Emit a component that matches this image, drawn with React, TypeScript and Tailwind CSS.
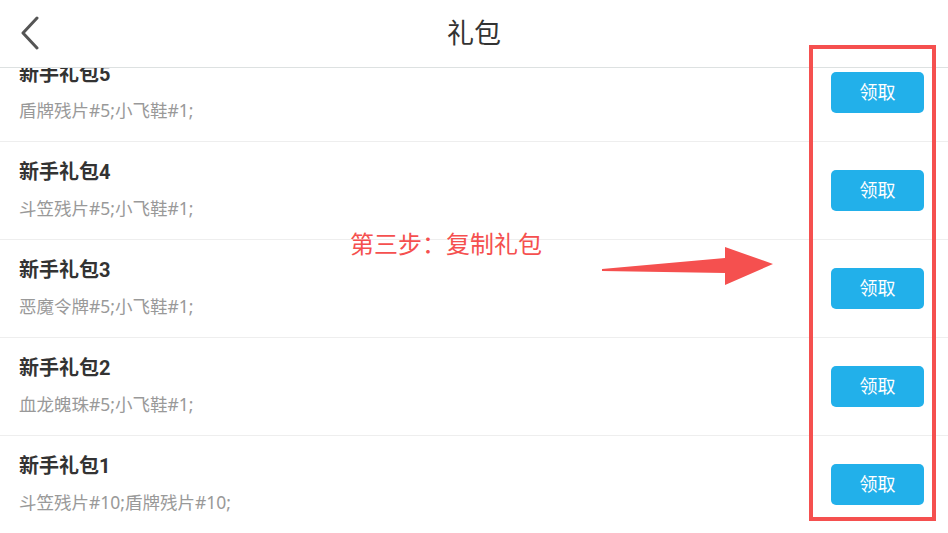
import React from 'react';

interface Gift {
  name: string;
  items: string;
}

const gifts: Gift[] = [
  { name: '新手礼包5', items: '盾牌残片#5;小飞鞋#1;' },
  { name: '新手礼包4', items: '斗笠残片#5;小飞鞋#1;' },
  { name: '新手礼包3', items: '恶魔令牌#5;小飞鞋#1;' },
  { name: '新手礼包2', items: '血龙魄珠#5;小飞鞋#1;' },
  { name: '新手礼包1', items: '斗笠残片#10;盾牌残片#10;' },
];

const GiftRow: React.FC<{ gift: Gift }> = ({ gift }) => (
  <div className="flex h-[98px] items-center justify-between border-b border-[#eeeeee] pl-[19px] pr-[24px]">
    <div className="flex flex-col pb-[4px]">
      <span className="text-[20px] font-bold leading-[26px] text-[#333333]">{gift.name}</span>
      <span
        className="mt-[12px] text-[17.5px] leading-[22px] text-[#999999]"
        style={{ fontFamily: '"Noto Sans", "Noto Sans CJK SC", sans-serif' }}
      >
        {gift.items}
      </span>
    </div>
    <button className="h-[41px] w-[93px] rounded-[5px] bg-[#22b0ea] text-[18px] text-white">领取</button>
  </div>
);

const App: React.FC = () => {
  return (
    <div
      className="relative flex h-[533px] w-[948px] flex-col overflow-hidden bg-white"
      style={{ fontFamily: 'Roboto, "Noto Sans CJK SC", sans-serif' }}
    >
      <div className="relative z-10 flex h-[68px] shrink-0 items-center justify-center border-b border-[#dde1e1] bg-white">
        <button className="absolute left-[19px] top-[16px] p-0" aria-label="back">
          <svg width="22" height="34" viewBox="0 0 22 34" fill="none">
            <path d="M18 2 L4 17 L18 32" stroke="#555555" strokeWidth="3" strokeLinecap="round" strokeLinejoin="round" />
          </svg>
        </button>
        <h1 className="pt-[2px] text-[27px] font-normal text-[#333333]">礼包</h1>
      </div>

      <div className="flex-1 overflow-hidden">
        <div className="-mt-[24px]">
          {gifts.map((gift) => (
            <GiftRow key={gift.name} gift={gift} />
          ))}
        </div>
      </div>

      {/* annotation overlay */}
      <div className="pointer-events-none absolute left-[809px] top-[45px] z-20 h-[476px] w-[127px] border-4 border-[#f5504f]" />
      <span className="pointer-events-none absolute left-[350px] top-[229px] z-20 text-[24px] leading-[32px] text-[#f5504f]">
        第三步：复制礼包
      </span>
      <svg className="pointer-events-none absolute left-0 top-0 z-20" width="948" height="533">
        <polygon points="602,269 725,258 725,247 773,264 725,285 725,273 602,271" fill="#f5504f" />
      </svg>
    </div>
  );
};

export default App;
